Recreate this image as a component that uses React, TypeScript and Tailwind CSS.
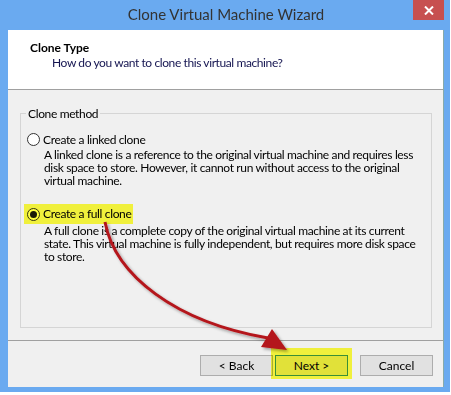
import React from "react";

const font = { fontFamily: 'Lato, "Segoe UI", Arial, sans-serif' };

function Radio({ checked }: { checked?: boolean }) {
  return (
    <span className="inline-flex items-center justify-center w-[13px] h-[13px] rounded-full border border-[#333] bg-white shrink-0">
      {checked && <span className="w-[7px] h-[7px] rounded-full bg-[#1a1a1a]" />}
    </span>
  );
}

function Btn({ children, def }: { children: React.ReactNode; def?: boolean }) {
  return (
    <div
      className={
        "w-[73px] h-[21px] flex items-center justify-center bg-[#e1e1e1] border text-[12px] text-black " +
        (def ? "border-[#3a8fd8]" : "border-[#adadad]")
      }
    >
      {children}
    </div>
  );
}

export default function App() {
  return (
    <div className="w-[451px] h-[395px] bg-white relative overflow-hidden" style={font}>
      <div className="w-[450px] h-[392px] bg-[#6aaaf0] flex flex-col pl-[8px] pr-[6px] pb-[5px]">
        {/* title bar */}
        <div className="h-[30px] flex items-center justify-center text-[15px] text-[#333] pb-[1px]">
          Clone Virtual Machine Wizard
        </div>
        {/* client */}
        <div className="flex-1 flex flex-col bg-[#f0f0f0] border-r border-[#8aa] relative">
          <div className="h-[60px] bg-white border-b border-[#a0a0a0] text-[12px]">
            <div className="pl-[22px] pt-[10px] font-bold text-black leading-[15px]">Clone Type</div>
            <div className="pl-[44px] pt-[0px] text-[#141450] leading-[15px] tracking-[-0.4px]">
              How do you want to clone this virtual machine?
            </div>
          </div>
          <fieldset className="ml-[12px] mr-[11px] mt-[16px] h-[222px] border border-[#d5d5d5] px-0 text-[12px] text-black tracking-[-0.35px]">
            <legend className="ml-[5px] px-[2px] leading-[15px]">Clone method</legend>
            <div className="pl-[6px] mt-[11px] flex items-center gap-[3px] leading-[15px]">
              <Radio />
              <span>Create a linked clone</span>
            </div>
            <div className="pl-[23px] leading-[13px] pr-[13px] mt-[1px]">
              A linked clone is a reference to the original virtual machine and requires less disk space to store. However, it cannot run without access to the original virtual machine.
            </div>
            <div className="mt-[17px] ml-[3px] w-[109px] h-[20px] pl-[3px] flex items-center gap-[3px] relative whitespace-nowrap">
              <Radio checked />
              <span>Create a full clone</span>
              <span className="absolute inset-0 bg-[#ffff40] mix-blend-multiply" />
            </div>
            <div className="pl-[23px] leading-[13px] pr-[13px] mt-[0px]">
              A full clone is a complete copy of the original virtual machine at its current state. This virtual machine is fully independent, but requires more disk space to store.
            </div>
          </fieldset>
          <div className="mt-auto border-t border-[#a0a0a0] h-[47px] flex items-start justify-end pr-[10px] pt-[14px] gap-[2px]">
            <Btn>&lt; Back</Btn>
            <div className="relative">
              <Btn def>Next &gt;</Btn>
              <span className="absolute -left-[4px] -right-[4px] -top-[7px] -bottom-[3px] bg-[#ffff40] mix-blend-multiply" />
            </div>
            <div className="ml-[10px]">
              <Btn>Cancel</Btn>
            </div>
          </div>
        </div>
      </div>
      {/* close button */}
      <div className="absolute left-[413px] top-0 w-[31px] h-[20px] bg-[#c75050] flex items-center justify-center">
        <svg width="10" height="9" viewBox="0 0 10 9">
          <path d="M1 0.5 L9 8.5 M9 0.5 L1 8.5" stroke="white" strokeWidth="2" />
        </svg>
      </div>
      {/* arrow */}
      <svg className="absolute left-0 top-0 pointer-events-none" width="451" height="395">
        <defs>
          <filter id="sh" x="-20%" y="-20%" width="140%" height="140%">
            <feDropShadow dx="2" dy="2" stdDeviation="1.5" floodColor="#000" floodOpacity="0.35" />
          </filter>
        </defs>
        <g filter="url(#sh)">
          <path d="M105 222 C 115 275, 175 322, 268 338" stroke="#b4141a" strokeWidth="3" fill="none" />
          <path d="M287 350 L261 347 L272 329 Z" fill="#b4141a" />
        </g>
      </svg>
    </div>
  );
}
